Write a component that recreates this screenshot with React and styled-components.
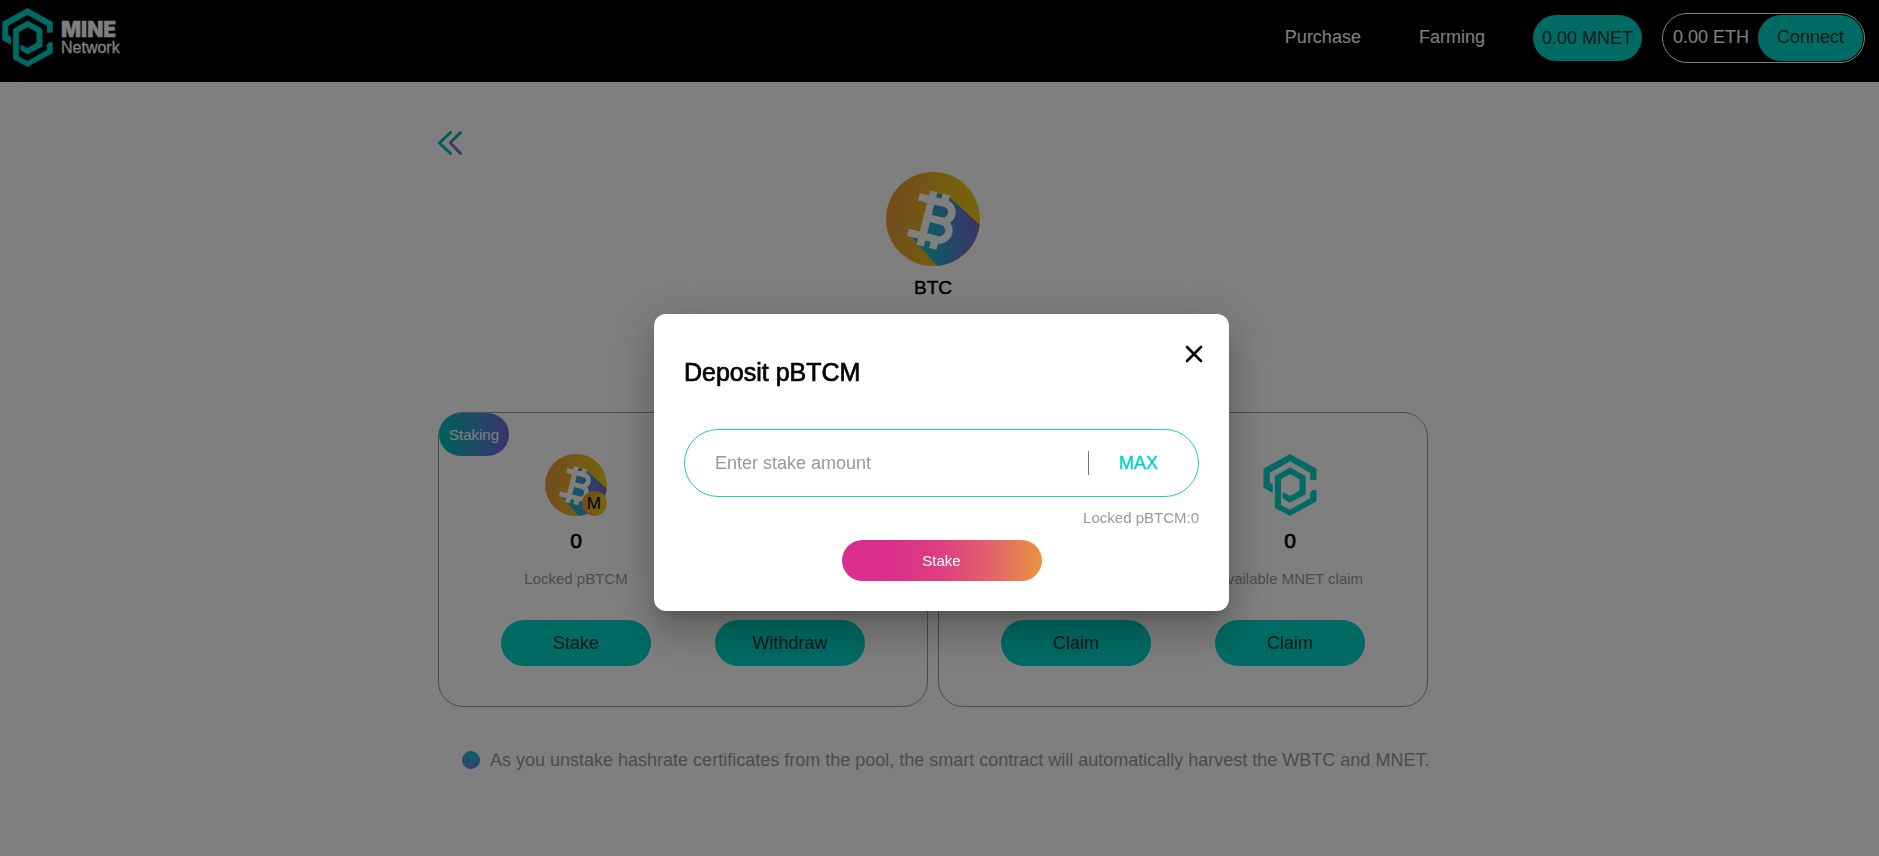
import React, { useId } from "react";
import styled, { createGlobalStyle } from "styled-components";

const teal = "#00d4c8";

const GlobalStyle = createGlobalStyle`
  *, *::before, *::after { box-sizing: border-box; }
  body {
    margin: 0;
    background: #fff;
    color: #000;
    font-family: "Liberation Sans", Arial, Helvetica, sans-serif;
    font-size: 18px;
  }
  button, input { font-family: inherit; }
  button { border: 0; padding: 0; background: none; cursor: pointer; }
`;

const Page = styled.div`
  min-height: 100vh;
`;

const Header = styled.header`
  display: flex;
  align-items: center;
  justify-content: space-between;
  padding: 8px 14px 15px 2px;
  background: #000;
`;

const Brand = styled.a`
  display: flex;
  align-items: center;
  gap: 8px;
  color: #fff;
  text-decoration: none;
`;

const BrandText = styled.span`
  display: flex;
  flex-direction: column;
  font-size: 16px;
  line-height: 16px;
  -webkit-text-stroke: 0.3px #fff;
`;

const BrandName = styled.strong`
  font-family: Inter, "Liberation Sans", sans-serif;
  font-size: 21px;
  font-weight: 900;
  line-height: 21px;
`;

const Nav = styled.nav`
  display: flex;
  align-items: center;
`;

const NavLink = styled.a`
  margin-right: ${(p) => (p.$last ? 48 : 58)}px;
  color: #fff;
  text-decoration: none;
`;

const Balance = styled.span`
  margin-right: 20px;
  padding: 0 9px;
  border-radius: 23px;
  background: ${teal};
  color: #333;
  line-height: 46px;
`;

const Wallet = styled.div`
  display: flex;
  align-items: center;
  gap: 9px;
  padding: 1px 1px 1px 10px;
  border: 1px solid #fff;
  border-radius: 25px;
  color: #fff;
`;

const TealButton = styled.button`
  width: ${(p) => p.$width}px;
  height: 46px;
  border-radius: 23px;
  background: ${teal};
  color: #333;
  font-size: 18px;
`;

const Main = styled.main`
  max-width: 990px;
  margin: 0 auto;
  padding-top: 49px;
  padding-bottom: 60px;
`;

const Content = styled.div`
  padding-right: 13px;
`;

const BackButton = styled.button`
  display: block;
  height: 24px;
`;

const Pool = styled.section`
  display: flex;
  flex-direction: column;
  align-items: center;
  gap: 10px;
  margin-top: 17px;
`;

const PoolName = styled.h1`
  margin: 0;
  font-size: 19px;
  font-weight: 400;
  line-height: 24px;
  -webkit-text-stroke: 0.5px #000;
`;

const Cards = styled.div`
  display: grid;
  grid-template-columns: 1fr 1fr;
  gap: 10px;
  margin-top: 112px;
`;

const Card = styled.section`
  position: relative;
  display: flex;
  justify-content: center;
  gap: 64px;
  align-items: flex-end;
  padding: 41px 0 40px;
  border: 1px solid #999;
  border-radius: 25px;
`;

const Badge = styled.span`
  position: absolute;
  top: 0;
  left: 0;
  width: 70px;
  border-radius: 22px;
  background: linear-gradient(90deg, #00c0b6, #7268e0);
  color: #fff;
  font-size: 15px;
  line-height: 43px;
  text-align: center;
`;

const Column = styled.div`
  display: flex;
  flex-direction: column;
  align-items: center;
  width: 150px;
`;

const Amount = styled.p`
  margin: 12px 0 15px;
  font-size: 21px;
  line-height: 26px;
  -webkit-text-stroke: 0.7px #000;
`;

const Caption = styled.p`
  margin: 0 0 31px;
  color: #999;
  font-size: 15px;
  line-height: 20px;
  white-space: nowrap;
`;

const Note = styled.p`
  display: flex;
  align-items: center;
  gap: 10px;
  margin: 41px -20px 0 24px;
  color: #999;
  line-height: 24px;
`;

const Dot = styled.span`
  flex: none;
  width: 18px;
  height: 18px;
  border-radius: 50%;
  background: linear-gradient(180deg, #00ccc0, #7d78ea);
`;

const Overlay = styled.div`
  position: fixed;
  inset: 0;
  display: flex;
  align-items: center;
  justify-content: center;
  padding: 69px 0 0 4px;
  background: rgba(0, 0, 0, 0.5);
`;

const Dialog = styled.form`
  display: flex;
  flex-direction: column;
  width: 575px;
  max-width: 100%;
  padding: 31px 30px 30px;
  border-radius: 12px;
  background: #fff;
  box-shadow:
    0 11px 15px -7px rgba(0, 0, 0, 0.2),
    0 24px 38px 3px rgba(0, 0, 0, 0.14),
    0 9px 46px 8px rgba(0, 0, 0, 0.12);
`;

const DialogHead = styled.div`
  display: flex;
  align-items: flex-start;
  justify-content: space-between;
  margin-right: -4px;
`;

const DialogTitle = styled.h2`
  margin: 11px 0 41px;
  font-size: 25px;
  font-weight: 400;
  line-height: 32px;
  -webkit-text-stroke: 0.7px #000;
`;

const CloseButton = styled.button`
  display: block;
  height: 18px;
`;

const Field = styled.div`
  display: flex;
  align-items: center;
  height: 68px;
  border: 1px solid #1fc8c0;
  border-radius: 34px;
`;

const AmountInput = styled.input`
  flex: 1;
  min-width: 0;
  height: 24px;
  padding: 0 0 0 30px;
  border: 0;
  border-right: 1px solid #777;
  outline: 0;
  background: none;
  font-size: 18px;
  &::placeholder { color: #999; opacity: 1; }
`;

const MaxButton = styled.button`
  width: 109px;
  padding-right: 10px;
  color: ${teal};
  font-size: 18px;
  -webkit-text-stroke: 0.4px ${teal};
`;

const Locked = styled.p`
  margin: 11px 0 12px;
  color: #999;
  font-size: 15px;
  line-height: 20px;
  text-align: right;
`;

const SubmitButton = styled.button`
  align-self: center;
  width: 200px;
  height: 41px;
  border-radius: 21px;
  background: linear-gradient(90deg, #da2f8c 0%, #da2f8c 22%, #dd3f80 50%, #e2646a 75%, #ea943a 100%);
  color: #fff;
  font-size: 15px;
`;

function MineLogo({ width, height }) {
  return (
    <svg
      width={width}
      height={height}
      viewBox="0 0 54 63"
      fill="#00d4c8"
      stroke="#00d4c8"
      strokeWidth="0.800"
      aria-hidden="true"
    >
      <path d="M27 0.500 53.500 15V26H48V19L27 7 6 19V29L9 31V39L0.500 34V15Z" />
      <path
        d="M27 14 42.500 22.500V41L27 49 20 45V39.500L27 43 37 37.500V25.500L27 20 17.500 25.500V52L27 57 48 45V39L50 37H53.500V48L27 62.500 12 54.500V22.500Z"
      />
    </svg>
  );
}

function BitcoinIcon({ size, badge }) {
  const id = useId();
  return (
    <svg width={size} height={size} viewBox="0 0 94 94" aria-hidden="true">
      <defs>
        <linearGradient id={id + "gold"} x1="0" y1="0.400" x2="1" y2="0.600">
          <stop offset="0.100" stopColor="#e39c38" />
          <stop offset="0.900" stopColor="#eccb14" />
        </linearGradient>
        <linearGradient id={id + "shade"} x1="0.150" y1="0.500" x2="1" y2="0.400">
          <stop offset="0.100" stopColor="#22b4c8" />
          <stop offset="0.500" stopColor="#4590cc" />
          <stop offset="0.900" stopColor="#7568cc" />
        </linearGradient>
        <clipPath id={id + "disc"}>
          <circle cx="47" cy="47" r="47" />
        </clipPath>
      </defs>
      <g clipPath={`url(#${id}disc)`}>
        <rect width="94" height="94" fill={`url(#${id}gold)`} />
        <path d="M45 28 44 20 62 24 94 53V94H51L24 63 36 62Z" fill={`url(#${id}shade)`} />
        <g transform="rotate(14 47 47)" fill="none" stroke="#fff" strokeWidth="7.500">
          <path d="M28 29H55a9 9 0 0 1 0 18H41M54 47h2a9.500 9.500 0 0 1 0 19H26M41 29V66M41 20V30M54 20V30M41 65V76M54 65V76" />
        </g>
      </g>
      {badge && (
        <g>
          <circle cx="75" cy="75" r="19" fill={`url(#${id}gold)`} />
          <text x="74" y="84" textAnchor="middle" fontSize="26" fontFamily="Liberation Sans, Arial, sans-serif">
            {badge}
          </text>
        </g>
      )}
    </svg>
  );
}

function BackIcon() {
  return (
    <svg width="24" height="24" viewBox="0 0 24 24" fill="none" strokeWidth="3" strokeLinecap="round" aria-hidden="true">
      <path d="M12.500 1.500 1.500 12 12.500 22.500" stroke="#00bfae" />
      <path d="M22.500 1.500 12.500 11.500" stroke="#12aeaa" />
      <path d="M22.500 22.500 12.500 12" stroke="#7a72c8" />
    </svg>
  );
}

function CloseIcon() {
  return (
    <svg width="18" height="18" viewBox="0 0 18 18" stroke="#000" strokeWidth="2.600" strokeLinecap="round" aria-hidden="true">
      <path d="M2 2 16 16M16 2 2 16" />
    </svg>
  );
}

function Stat({ icon, caption, action }) {
  return (
    <Column>
      {icon}
      {caption && <Amount>0</Amount>}
      {caption && <Caption>{caption}</Caption>}
      <TealButton type="button" $width={150}>{action}</TealButton>
    </Column>
  );
}

export default function App() {
  return (
    <Page>
      <GlobalStyle />
      <Header>
        <Brand href="#">
          <MineLogo width={51} height={59} />
          <BrandText>
            <BrandName>MINE</BrandName>
            Network
          </BrandText>
        </Brand>
        <Nav>
          <NavLink href="#purchase">Purchase</NavLink>
          <NavLink href="#farming" $last>Farming</NavLink>
          <Balance>0.00 MNET</Balance>
          <Wallet>
            0.00 ETH
            <TealButton type="button" $width={105}>Connect</TealButton>
          </Wallet>
        </Nav>
      </Header>

      <Content>
        <Main>
          <BackButton type="button" aria-label="Back"><BackIcon /></BackButton>
          <Pool>
            <BitcoinIcon size={94} />
            <PoolName>BTC</PoolName>
          </Pool>
          <Cards>
            <Card>
              <Badge>Staking</Badge>
              <Stat icon={<BitcoinIcon size={62} badge="M" />} caption="Locked pBTCM" action="Stake" />
              <Stat action="Withdraw" />
            </Card>
            <Card>
              <Stat action="Claim" />
              <Stat icon={<MineLogo width={54} height={62} />} caption="Available MNET claim" action="Claim" />
            </Card>
          </Cards>
          <Note>
            <Dot />
            As you unstake hashrate certificates from the pool, the smart contract will automatically harvest the WBTC and MNET.
          </Note>
        </Main>
      </Content>

      <Overlay>
        <Dialog role="dialog" aria-modal="true" aria-labelledby="deposit-title" onSubmit={(e) => e.preventDefault()}>
          <DialogHead>
            <DialogTitle id="deposit-title">Deposit pBTCM</DialogTitle>
            <CloseButton type="button" aria-label="Close"><CloseIcon /></CloseButton>
          </DialogHead>
          <Field>
            <AmountInput type="text" aria-label="Stake amount" placeholder="Enter stake amount" />
            <MaxButton type="button">MAX</MaxButton>
          </Field>
          <Locked>Locked pBTCM:0</Locked>
          <SubmitButton type="submit">Stake</SubmitButton>
        </Dialog>
      </Overlay>
    </Page>
  );
}
